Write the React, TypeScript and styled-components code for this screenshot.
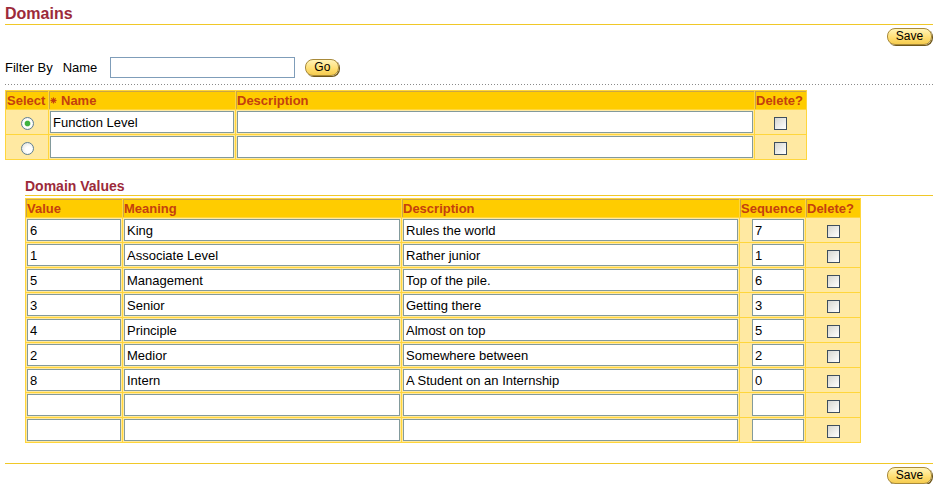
import React, { useState } from "react";
import styled, { createGlobalStyle } from "styled-components";

const GlobalStyle = createGlobalStyle`
  body {
    margin: 0;
    background: #ffffff;
    font-family: "Liberation Sans", Arial, sans-serif;
    font-size: 13px;
    color: #000000;
  }
`;

const Page = styled.div`
  display: flex;
  flex-direction: column;
  padding: 4px 4px 0 5px;
`;

const Title = styled.h1`
  margin: 0;
  font-size: 16px;
  line-height: 20px;
  font-weight: bold;
  color: #9c2a3a;
  border-bottom: 1px solid #f0c828;
`;

const SaveRow = styled.div`
  display: flex;
  justify-content: flex-end;
  padding: 3px 1px 0 0;
`;

const PillButton = styled.button<{ $w: number }>`
  width: ${(p) => p.$w}px;
  height: 17px;
  padding: 0;
  font-family: "Liberation Sans", Arial, sans-serif;
  font-size: 12px;
  line-height: 15px;
  color: #000;
  background: linear-gradient(#fff4b8, #ffdd70 60%, #f5cc50);
  border: 1px solid #a88a3a;
  border-radius: 8px;
  box-shadow: 1px 1px 0 #6e5618;
  cursor: pointer;
`;

const FilterRow = styled.div`
  display: flex;
  align-items: center;
  margin-top: 12px;
`;

const FilterLabel = styled.span<{ $gap: number }>`
  margin-right: ${(p) => p.$gap}px;
  line-height: 21px;
`;

const TextField = styled.input`
  box-sizing: border-box;
  width: 185px;
  height: 21px;
  margin-right: 10px;
  border: 1px solid #7f9db9;
  font-family: inherit;
  font-size: 13px;
`;

const DottedRule = styled.div`
  height: 1px;
  margin: 6px 0 5px;
  background: repeating-linear-gradient(to right, #8a8a8a 0 1px, transparent 1px 3px);
`;

const Grid = styled.table<{ $w: number }>`
  width: ${(p) => p.$w}px;
  table-layout: fixed;
  border-collapse: collapse;
  border: 1px solid #ffd63c;
`;

const HeadCell = styled.th<{ $w: number }>`
  box-sizing: border-box;
  width: ${(p) => p.$w}px;
  height: 19px;
  padding: 0 1px;
  text-align: left;
  white-space: nowrap;
  overflow: hidden;
  font-size: 13px;
  font-weight: bold;
  color: #c4400e;
  background: #ffcc00;
  border: 1px solid #ffd63c;
  box-shadow: inset 1px 1px 0 #c9a548;
`;

const Cell = styled.td<{ $align?: string }>`
  height: 22px;
  padding: 1px;
  text-align: ${(p) => p.$align || "left"};
  background: #ffe9a2;
  border: 1px solid #ffd63c;
`;

const CellInput = styled.input<{ $w?: number }>`
  box-sizing: border-box;
  display: inline-block;
  vertical-align: middle;
  width: ${(p) => (p.$w ? `${p.$w}px` : "100%")};
  height: 22px;
  margin: 0;
  padding: 0 2px;
  border: 1px solid #829a9c;
  font-family: "Liberation Sans", Arial, sans-serif;
  font-size: 13px;
  color: #000;
  background: #fff;
`;

const Radio = styled.input`
  appearance: none;
  width: 13px;
  height: 13px;
  margin: 0;
  vertical-align: middle;
  border: 1px solid #5f7f90;
  border-radius: 50%;
  background: radial-gradient(circle at 60% 60%, #ffffff 30%, #dcdcd6);
  &:checked {
    background: radial-gradient(circle, #3fb23f 0 2.5px, #c8ecc0 3px, #ffffff 3.5px 4px, #e0e0da);
  }
`;

const Check = styled.input`
  appearance: none;
  width: 13px;
  height: 13px;
  margin: 0;
  vertical-align: middle;
  border: 1px solid #3e4e5e;
  background: linear-gradient(135deg, #d6d6d0, #ffffff);
`;

const Section = styled.div`
  display: flex;
  flex-direction: column;
  padding-left: 20px;
  margin-top: 18px;
`;

const SubTitle = styled.h2`
  margin: 0 0 2px;
  font-size: 14px;
  line-height: 17px;
  font-weight: bold;
  color: #9c2a3a;
  border-bottom: 1px solid #f0c828;
`;

const BottomRule = styled.div`
  height: 1px;
  margin-top: 20px;
  background: #f0c828;
`;

const Star = () => (
  <svg width="7" height="7" viewBox="0 0 8 8" style={{ marginRight: 4, verticalAlign: 1 }}>
    <g stroke="#c4400e" strokeWidth="1.4">
      <line x1="4" y1="0.5" x2="4" y2="7.5" />
      <line x1="0.5" y1="4" x2="7.5" y2="4" />
      <line x1="1.5" y1="1.5" x2="6.5" y2="6.5" />
      <line x1="6.5" y1="1.5" x2="1.5" y2="6.5" />
    </g>
  </svg>
);

const domains = [{ name: "Function Level", description: "" }, { name: "", description: "" }];

const values = [
  ["6", "King", "Rules the world", "7"],
  ["1", "Associate Level", "Rather junior", "1"],
  ["5", "Management", "Top of the pile.", "6"],
  ["3", "Senior", "Getting there", "3"],
  ["4", "Principle", "Almost on top", "5"],
  ["2", "Medior", "Somewhere between", "2"],
  ["8", "Intern", "A Student on an Internship", "0"],
  ["", "", "", ""],
  ["", "", "", ""],
];

export default function App() {
  const [selected, setSelected] = useState(0);
  return (
    <Page>
      <GlobalStyle />
      <Title>Domains</Title>
      <SaveRow>
        <PillButton $w={45}>Save</PillButton>
      </SaveRow>
      <FilterRow>
        <FilterLabel $gap={10}>Filter By</FilterLabel>
        <FilterLabel $gap={13}>Name</FilterLabel>
        <TextField />
        <PillButton $w={34}>Go</PillButton>
      </FilterRow>
      <DottedRule />
      <Grid $w={801}>
        <thead>
          <tr>
            <HeadCell $w={43}>Select</HeadCell>
            <HeadCell $w={187}>
              <Star />
              Name
            </HeadCell>
            <HeadCell $w={519}>Description</HeadCell>
            <HeadCell $w={52}>Delete?</HeadCell>
          </tr>
        </thead>
        <tbody>
          {domains.map((d, i) => (
            <tr key={i}>
              <Cell $align="center">
                <Radio type="radio" name="sel" checked={selected === i} onChange={() => setSelected(i)} />
              </Cell>
              <Cell>
                <CellInput defaultValue={d.name} />
              </Cell>
              <Cell>
                <CellInput defaultValue={d.description} />
              </Cell>
              <Cell $align="center">
                <Check type="checkbox" />
              </Cell>
            </tr>
          ))}
        </tbody>
      </Grid>
      <Section>
        <SubTitle>Domain Values</SubTitle>
        <Grid $w={835}>
          <thead>
            <tr>
              <HeadCell $w={97}>Value</HeadCell>
              <HeadCell $w={279}>Meaning</HeadCell>
              <HeadCell $w={338}>Description</HeadCell>
              <HeadCell $w={66}>Sequence</HeadCell>
              <HeadCell $w={55}>Delete?</HeadCell>
            </tr>
          </thead>
          <tbody>
            {values.map((v, i) => (
              <tr key={i}>
                <Cell>
                  <CellInput defaultValue={v[0]} />
                </Cell>
                <Cell>
                  <CellInput defaultValue={v[1]} />
                </Cell>
                <Cell>
                  <CellInput defaultValue={v[2]} />
                </Cell>
                <Cell $align="right">
                  <CellInput $w={52} defaultValue={v[3]} />
                </Cell>
                <Cell $align="center">
                  <Check type="checkbox" />
                </Cell>
              </tr>
            ))}
          </tbody>
        </Grid>
      </Section>
      <BottomRule />
      <SaveRow>
        <PillButton $w={45}>Save</PillButton>
      </SaveRow>
    </Page>
  );
}
